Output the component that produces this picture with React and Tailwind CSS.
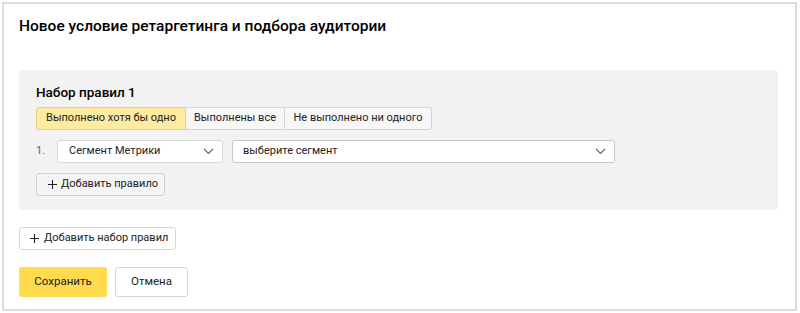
import React from 'react';

function Chevron() {
  return (
    <svg width="11" height="7" viewBox="0 0 11 7" fill="none" className="text-[#666]">
      <path d="M1 1l4.5 4.5L10 1" stroke="currentColor" strokeWidth="1.1" />
    </svg>
  );
}

function Plus() {
  return (
    <svg width="9" height="9" viewBox="0 0 9 9" className="shrink-0 text-[#222]">
      <path d="M4.5 0v9M0 4.5h9" stroke="currentColor" strokeWidth="1.1" />
    </svg>
  );
}

const tabs = [
  { label: 'Выполнено хотя бы одно', w: 'w-[150px]' },
  { label: 'Выполнены все', w: 'w-[99px]' },
  { label: 'Не выполнено ни одного', w: 'w-[147px]' },
];

export default function App() {
  return (
    <div className="w-[800px] h-[313px] bg-white p-[2px] font-['Roboto',sans-serif] text-[#222]">
      <div className="h-[309px] w-[795px] border-2 border-[#dcdcdc] pl-[15px] pr-[17px] pt-[12px]">
        <h1 className="text-[15.5px] font-medium leading-[20px] text-black">
          Новое условие ретаргетинга и подбора аудитории
        </h1>

        <div className="mt-[34px] h-[140px] rounded-[3px] bg-[#f2f2f2] px-[17px] pt-[13px]">
          <div className="text-[13.5px] font-medium leading-[18px] text-black">Набор правил 1</div>

          <div className="mt-[6px] flex h-[23px] w-fit text-[11px]">
            {tabs.map((t, i) => (
              <div
                key={t.label}
                className={
                  t.w +
                  (i === 0
                    ? ' flex items-center justify-center whitespace-nowrap rounded-l-[3px] border border-[#e6d08a] bg-[#feeaa1]'
                    : i === 1
                    ? ' flex items-center justify-center whitespace-nowrap border-y border-r border-[#d4d4d4] bg-[#f7f7f7]'
                    : ' flex items-center justify-center whitespace-nowrap rounded-r-[3px] border-y border-r border-[#d4d4d4] bg-[#f7f7f7]')
                }
              >
                {t.label}
              </div>
            ))}
          </div>

          <div className="mt-[10px] flex h-[23px] items-center text-[11px]">
            <span className="w-[21px] text-[#666]">1.</span>
            <div className="flex h-full w-[166px] items-center justify-between rounded-[3px] border border-[#d6d6d6] bg-white pl-[11px] pr-[8px]">
              <span>Сегмент Метрики</span>
              <Chevron />
            </div>
            <div className="ml-[9px] flex h-full w-[383px] items-center justify-between rounded-[3px] border border-[#c8c8c8] bg-white pl-[10px] pr-[8px]">
              <span>выберите сегмент</span>
              <Chevron />
            </div>
          </div>

          <button className="mt-[10px] flex h-[23px] w-[129px] items-center gap-[4px] whitespace-nowrap rounded-[3px] border border-[#d0d0d0] bg-[#f4f4f4] px-[11px] text-[11px]">
            <Plus />
            Добавить правило
          </button>
        </div>

        <button className="mt-[17px] flex h-[23px] w-[157px] items-center gap-[5px] whitespace-nowrap rounded-[3px] border border-[#d6d6d6] bg-white px-[10px] text-[11px]">
          <Plus />
          Добавить набор правил
        </button>

        <div className="mt-[17px] flex gap-[8px] text-[11.5px]">
          <button className="h-[30px] w-[88px] rounded-[3px] bg-[#ffdb4d]">Сохранить</button>
          <button className="h-[30px] w-[73px] rounded-[3px] border border-[#d6d6d6] bg-white">Отмена</button>
        </div>
      </div>
    </div>
  );
}
